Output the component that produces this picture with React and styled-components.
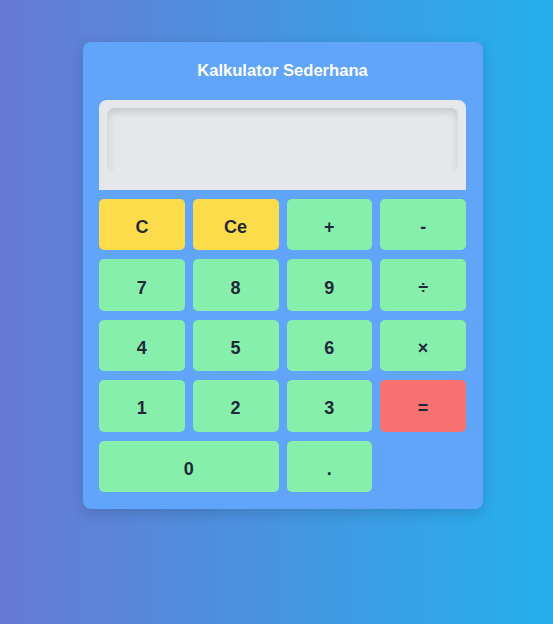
import React, { useState } from "react";
import styled, { createGlobalStyle } from "styled-components";

const GlobalStyle = createGlobalStyle`
  body {
    margin: 0;
    font-family: "Liberation Sans", Arial, sans-serif;
  }
`;

const Page = styled.div`
  min-height: 100vh;
  box-sizing: border-box;
  padding: 42px 0 0 83px;
  background: linear-gradient(to right, #687ad3, #4a92df 45%, #25afec);
`;

const Card = styled.div`
  width: 400px;
  box-sizing: border-box;
  padding: 16px 17px 17px 16px;
  background: #60a5fa;
  border-radius: 8px;
  box-shadow: 0 4px 14px rgba(0, 0, 0, 0.15);
`;

const Title = styled.h1`
  margin: 0 0 16px;
  font-size: 16.6px;
  line-height: 26px;
  font-weight: 700;
  color: #ffffff;
  text-align: center;
`;

const Display = styled.div`
  height: 90px;
  box-sizing: border-box;
  padding: 8px 8px 18px 8px;
  background: #e5e7eb;
  border-radius: 8px 8px 0 0;
`;

const Screen = styled.input`
  width: 100%;
  height: 100%;
  box-sizing: border-box;
  border: none;
  outline: none;
  border-radius: 7px;
  padding: 0 12px;
  background: #e5e7eb;
  box-shadow: inset 0 3px 9px rgba(0, 0, 0, 0.16),
    inset 0 -2px 4px rgba(255, 255, 255, 0.5);
  font-family: "Liberation Sans", Arial, sans-serif;
  font-size: 24px;
  text-align: right;
  color: #1f2937;
`;

const Keys = styled.div`
  margin-top: 9px;
  display: grid;
  grid-template-columns: repeat(4, 1fr);
  grid-auto-rows: 51.4px;
  column-gap: 8px;
  row-gap: 9px;
`;

const colors = {
  clear: "#fddc4b",
  num: "#86efac",
  equal: "#f87171",
};

const Key = styled.button`
  grid-column: span ${(p) => p.$span || 1};
  border: none;
  border-radius: 5px;
  padding: 6px 0 0;
  background: ${(p) => colors[p.$kind || "num"]};
  color: #1f2937;
  font-family: "Liberation Sans", Arial, sans-serif;
  font-size: 18px;
  font-weight: 700;
  cursor: pointer;
`;

const keys = [
  { label: "C", kind: "clear" },
  { label: "Ce", kind: "clear" },
  { label: "+" },
  { label: "-" },
  { label: "7" },
  { label: "8" },
  { label: "9" },
  { label: "÷" },
  { label: "4" },
  { label: "5" },
  { label: "6" },
  { label: "×" },
  { label: "1" },
  { label: "2" },
  { label: "3" },
  { label: "=", kind: "equal" },
  { label: "0", span: 2 },
  { label: "." },
];

function App() {
  const [value, setValue] = useState("");

  function press(label) {
    if (label === "C") setValue("");
    else if (label === "Ce") setValue(value.slice(0, -1));
    else if (label === "=") {
      try {
        const expr = value.replace(/÷/g, "/").replace(/×/g, "*");
        // eslint-disable-next-line
        setValue(String(Function(`return (${expr})`)()));
      } catch (e) {
        setValue("Error");
      }
    } else setValue(value + label);
  }

  return (
    <Page>
      <GlobalStyle />
      <Card>
        <Title>Kalkulator Sederhana</Title>
        <Display>
          <Screen value={value} readOnly />
        </Display>
        <Keys>
          {keys.map((k) => (
            <Key
              key={k.label}
              $kind={k.kind}
              $span={k.span}
              onClick={() => press(k.label)}
            >
              {k.label}
            </Key>
          ))}
        </Keys>
      </Card>
    </Page>
  );
}

export default App;
